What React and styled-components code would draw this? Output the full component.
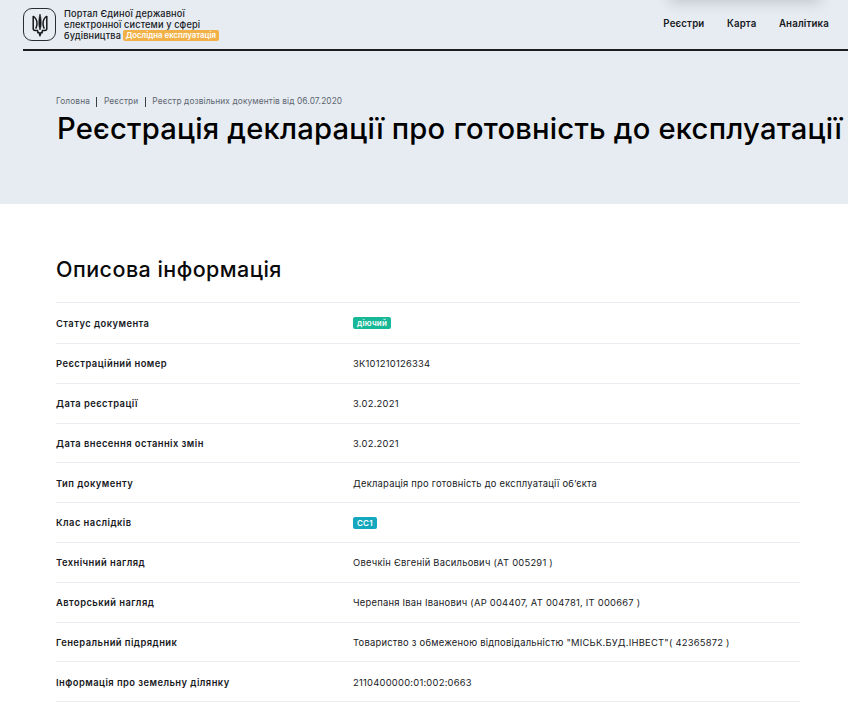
import styled, { createGlobalStyle } from "styled-components";

const Global = createGlobalStyle`
  html, body { margin: 0; padding: 0; background: #fff; }
  body { font-family: Inter, "Noto Sans", sans-serif; color: #000; overflow: hidden; height: 707px; }
`;

const rows = [
  { name: "Статус документа", badge: "діючий", color: "#17b897", h: 41 },
  { name: "Реєстраційний номер", value: "ЗК101210126334", h: 39.8 },
  { name: "Дата реєстрації", value: "3.02.2021", h: 39.8 },
  { name: "Дата внесення останніх змін", value: "3.02.2021", h: 39.8 },
  { name: "Тип документу", value: "Декларація про готовність до експлуатації об’єкта", h: 39.8 },
  { name: "Клас наслідків", badge: "СС1", color: "#14a7bd", h: 39.8 },
  { name: "Технічний нагляд", value: "Овечкін Євгеній Васильович (АТ 005291 )", h: 39.8 },
  { name: "Авторський нагляд", value: "Черепаня Іван Іванович (АР 004407, АТ 004781, ІТ 000667 )", h: 39.8 },
  { name: "Генеральний підрядник", value: "Товариство з обмеженою відповідальністю \"МІСЬК.БУД.ІНВЕСТ\"( 42365872 )", h: 39.8 },
  { name: "Інформація про земельну ділянку", value: "2110400000:01:002:0663", h: 39.8 },
];

function Trident() {
  return (
    <svg width="16" height="24" viewBox="0 0 16 24" fill="none" stroke="#15171a" strokeWidth="1.5" strokeLinejoin="round">
      <path d="M8 1C7 4 6.800 7 6.800 10c0 3 .4 5 1.200 7 .8-2 1.200-4 1.200-7 0-3-.2-6-1.200-9z" fill="#15171a" strokeWidth="0.6" />
      <path d="M1.200 3v12.500c0 1.300.8 2 2 2H6" />
      <path d="M14.800 3v12.500c0 1.300-.8 2-2 2H10" />
      <path d="M1.200 3C3.600 4.800 5 7.300 5 10.500c0 2-.5 3.800-1.300 5.200" />
      <path d="M14.800 3C12.400 4.800 11 7.300 11 10.500c0 2 .5 3.800 1.300 5.200" />
      <path d="M5.800 17.500v2.300h1.400l.8 3 .8-3h1.400v-2.300" />
    </svg>
  );
}

export default function App() {
  return (
    <Page>
      <Global />
      <Hero>
        <Glow />
        <Header>
          <Brand>
            <Logo><Trident /></Logo>
            <BrandText>
              Портал Єдиної державної<br />
              електронної системи у сфері<br />
              будівництва <Pilot>Дослідна експлуатація</Pilot>
            </BrandText>
          </Brand>
          <Nav>
            <NavLink>Реєстри</NavLink>
            <NavLink>Карта</NavLink>
            <NavLink>Аналітика</NavLink>
          </Nav>
        </Header>
        <HeroBody>
          <Crumbs>
            <Crumb>Головна</Crumb>
            <Sep />
            <Crumb>Реєстри</Crumb>
            <Sep />
            <Crumb>Реєстр дозвільних документів від 06.07.2020</Crumb>
          </Crumbs>
          <Title>Реєстрація декларації про готовність до експлуатації</Title>
        </HeroBody>
      </Hero>
      <Content>
        <Heading>Описова інформація</Heading>
        <Table>
          {rows.map((row) => (
            <Row key={row.name} $h={row.h}>
              <Label>{row.name}</Label>
              <Value>
                {row.badge ? <Badge $color={row.color}>{row.badge}</Badge> : row.value}
              </Value>
            </Row>
          ))}
        </Table>
      </Content>
    </Page>
  );
}

const Page = styled.div`
  width: 848px;
  height: 707px;
  overflow: hidden;
`;

const Hero = styled.section`
  position: relative;
  height: 204px;
  background: #e6ecf1;
  overflow: hidden;
`;

const Glow = styled.div`
  position: absolute;
  top: -30px;
  left: 670px;
  width: 150px;
  height: 30px;
  box-shadow: 0 2px 14px rgba(40, 50, 70, 0.22);
  background: #dfe4ea;
`;

const Header = styled.header`
  display: flex;
  justify-content: space-between;
  align-items: flex-start;
  height: 49px;
  margin-left: 23px;
  border-bottom: 2px solid #1c1e22;
  box-sizing: content-box;
`;

const Brand = styled.div`
  display: flex;
  align-items: flex-start;
  gap: 8px;
  padding-top: 8px;
`;

const Logo = styled.div`
  display: flex;
  align-items: center;
  justify-content: center;
  box-sizing: border-box;
  width: 33px;
  height: 33px;
  border: 1px solid #2a2c30;
  border-radius: 9px;
`;

const BrandText = styled.div`
  font-size: 9.2px;
  line-height: 11px;
  font-weight: 500;
  letter-spacing: 0.14px;
  color: #17191d;
`;

const Pilot = styled.span`
  display: inline-block;
  padding: 0 3px;
  height: 11px;
  line-height: 11px;
  font-size: 7.8px;
  font-weight: 600;
  letter-spacing: 0;
  color: #fff;
  background: #f2b146;
  border-radius: 2px;
  vertical-align: top;
  margin-left: -1px;
`;

const Nav = styled.nav`
  display: flex;
  gap: 22.500px;
  padding: 18px 19px 0 0;
`;

const NavLink = styled.a`
  font-size: 9.7px;
  line-height: 12px;
  font-weight: 600;
  letter-spacing: 0.15px;
  color: #17191d;
`;

const HeroBody = styled.div`
  padding: 44px 0 0 57px;
`;

const Crumbs = styled.div`
  display: flex;
  align-items: center;
  gap: 6.500px;
  height: 12px;
  margin-left: -1px;
`;

const Crumb = styled.span`
  font-size: 8.3px;
  font-weight: 400;
  letter-spacing: 0.12px;
  color: #5d6570;
  white-space: nowrap;
`;

const Sep = styled.i`
  display: block;
  width: 1px;
  height: 10px;
  margin-top: 2px;
  background: #3c4046;
`;

const Title = styled.h1`
  margin: 4px 0 0;
  font-size: 29.200px;
  line-height: 36px;
  font-weight: 500;
  letter-spacing: 0.2px;
  color: #000;
  white-space: nowrap;
`;

const Content = styled.main`
  padding: 53px 48px 0 56px;
`;

const Heading = styled.h2`
  margin: 0 0 20px;
  font-size: 21.500px;
  line-height: 25px;
  font-weight: 500;
  letter-spacing: 0.45px;
  color: #0a0a0a;
`;

const Table = styled.div`
  border-top: 1px solid #e9edf1;
`;

const Row = styled.div`
  display: grid;
  grid-template-columns: 297px 1fr;
  align-items: center;
  box-sizing: border-box;
  height: ${(p) => p.$h}px;
  padding-top: 0.6px;
  border-bottom: 1px solid #e9edf1;
`;

const Label = styled.div`
  font-size: 9.4px;
  font-weight: 600;
  letter-spacing: 0.45px;
  color: #17191d;
`;

const Value = styled.div`
  display: flex;
  align-items: center;
  font-size: 9.4px;
  font-weight: 400;
  letter-spacing: 0.24px;
  color: #17191d;
  white-space: nowrap;
`;

const Badge = styled.span`
  display: inline-block;
  padding: 0 4px;
  height: 12px;
  line-height: 12px;
  font-size: 8px;
  font-weight: 600;
  letter-spacing: 0.2px;
  color: #fff;
  background: ${(p) => p.$color};
  border-radius: 2px;
`;
